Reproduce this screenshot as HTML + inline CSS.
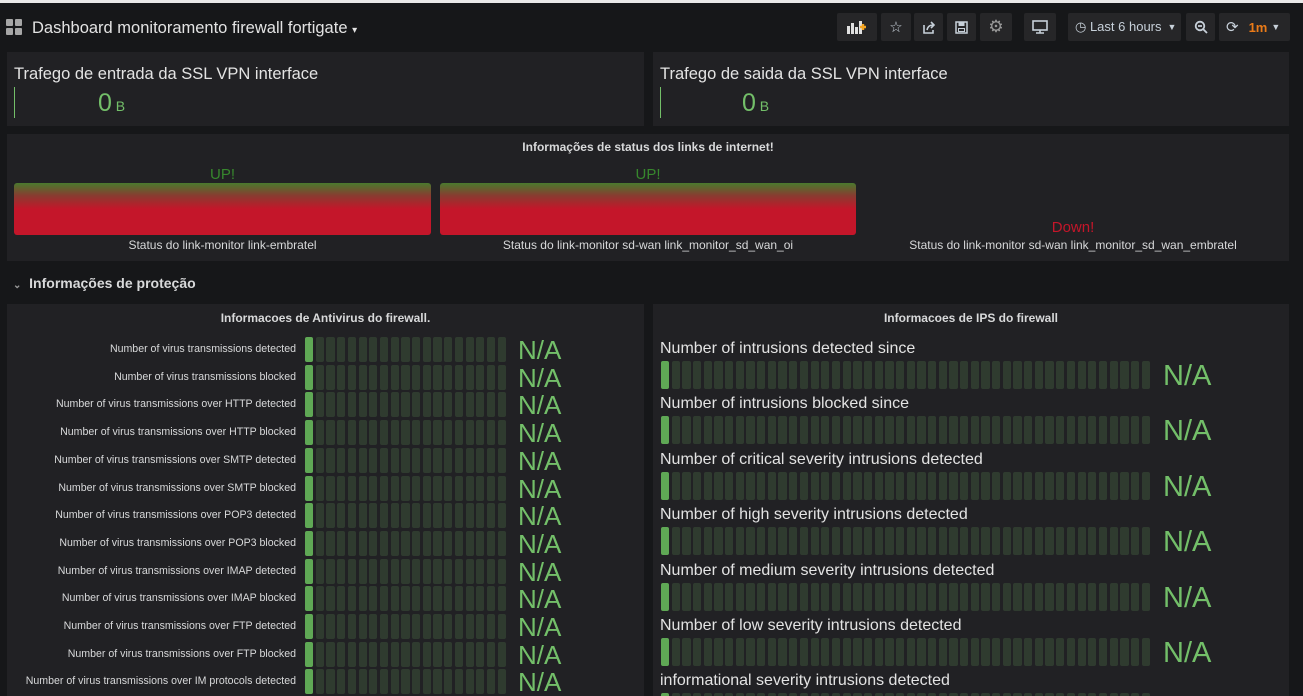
<!DOCTYPE html>
<html style="overflow:hidden;height:696px"><head><meta charset="utf-8"><style>
*{box-sizing:border-box;margin:0;padding:0}
body{width:1303px;height:696px;overflow:hidden;background:#161719;font-family:"Liberation Sans",sans-serif;color:#d8d9da;position:relative}
.a{position:absolute}
.p{position:absolute;background:#212124}
.btn{position:absolute;top:13px;height:28px;background:#262628;border-radius:2px;color:#c7d0d9;font-size:13px;display:flex;align-items:center;justify-content:center}
.g{color:#73bf69}
.cell{position:absolute;background:#2f3b2f;border-radius:2px}
</style></head><body>
<div class="a" style="left:0;top:0;width:1303px;height:3px;background:#e8e8e8"></div>
<svg class="a" style="left:6px;top:19px" width="17" height="16"><rect x="0" y="0" width="7" height="7" rx="1" fill="#a6a6a6"/><rect x="9" y="0" width="7" height="7" rx="1" fill="#a6a6a6"/><rect x="0" y="9" width="7" height="7" rx="1" fill="#a6a6a6"/><rect x="9" y="9" width="7" height="7" rx="1" fill="#a6a6a6"/></svg>
<div class="a" style="left:32px;top:19px;font-size:16.5px;color:#e3e3e3">Dashboard monitoramento firewall fortigate <span style="font-size:10px">▾</span></div>
<div class="btn" style="left:837px;width:40px"><svg width="22" height="14"><rect x="1" y="6" width="3" height="8" fill="#e0e0e0"/><rect x="5" y="3" width="3" height="11" fill="#e0e0e0"/><rect x="9" y="7" width="3" height="7" fill="#e0e0e0"/><rect x="13" y="1" width="3" height="13" fill="#e0e0e0"/><path d="M17 4v6M14 7h6" stroke="#f5a623" stroke-width="2.4"/></svg></div>
<div class="btn" style="left:881px;width:30px;font-size:15px">☆</div>
<div class="btn" style="left:914px;width:29px"><svg width="14" height="13"><path d="M2 4v8h9v-3" fill="none" stroke="#c7d0d9" stroke-width="1.6"/><path d="M5 9c1-4 3-5 7-5M9 1l3 3-3 3" fill="none" stroke="#c7d0d9" stroke-width="1.6"/></svg></div>
<div class="btn" style="left:947px;width:29px"><svg width="13" height="13"><rect x="1" y="1" width="11" height="11" fill="none" stroke="#c7d0d9" stroke-width="1.5"/><rect x="3.5" y="1" width="6" height="4" fill="#c7d0d9"/><rect x="3.5" y="7.5" width="6" height="3" fill="none" stroke="#c7d0d9"/></svg></div>
<div class="btn" style="left:980px;width:32px;font-size:17px;color:#9a9a9a">⚙</div>
<div class="btn" style="left:1024px;width:32px"><svg width="16" height="14"><rect x="1" y="1" width="14" height="9" fill="none" stroke="#c7d0d9" stroke-width="1.6"/><path d="M8 10v3M4 13h8" stroke="#c7d0d9" stroke-width="1.6"/></svg></div>
<div class="btn" style="left:1068px;width:113px;justify-content:flex-start;padding-left:7px">◷&nbsp;Last 6 hours <span style="font-size:9px;margin-left:6px">▼</span></div>
<div class="btn" style="left:1186px;width:29px"><svg width="14" height="14"><circle cx="6" cy="6" r="4.3" fill="none" stroke="#c7d0d9" stroke-width="1.8"/><path d="M9 9l4 4M4 6h4" stroke="#c7d0d9" stroke-width="1.8"/></svg></div>
<div class="btn" style="left:1219px;width:71px;justify-content:flex-start;padding-left:7px"><span style="font-size:15px">⟳</span><span style="color:#eb7b18;font-weight:bold;margin-left:10px">1m</span><span style="font-size:9px;margin-left:4px">▼</span></div>
<div class="p" style="left:7px;top:52px;width:637px;height:74px">
<div class="a" style="left:7px;top:13px;font-size:16.5px;color:#e3e3e3">Trafego de entrada da SSL VPN interface</div>
<div class="a" style="left:7px;top:35px;width:1px;height:31px;background:#73bf69"></div>
<div class="a g" style="left:91px;top:37px;font-size:25px">0<span style="font-size:14px"> B</span></div></div>
<div class="p" style="left:653px;top:52px;width:636px;height:74px">
<div class="a" style="left:7px;top:13px;font-size:16.5px;color:#e3e3e3">Trafego de saida da SSL VPN interface</div>
<div class="a" style="left:7px;top:35px;width:1px;height:31px;background:#73bf69"></div>
<div class="a g" style="left:89px;top:37px;font-size:25px">0<span style="font-size:14px"> B</span></div></div>
<div class="p" style="left:7px;top:134px;width:1282px;height:127px">
<div class="a" style="left:0;width:1282px;top:6px;text-align:center;font-size:12px;font-weight:bold">Informações de status dos links de internet!</div>
<div class="a" style="left:7px;width:417px;top:32px;text-align:center;color:#37872d;font-size:15px">UP!</div>
<div class="a" style="left:7px;width:417px;top:49px;height:52px;border-radius:3px;background:linear-gradient(#4a7a2e 0%,#8a3a30 25%,#c4162a 50%,#c4162a 100%)"></div>
<div class="a" style="left:7px;width:417px;top:104px;text-align:center;font-size:12px">Status do link-monitor link-embratel</div>
<div class="a" style="left:433px;width:416px;top:32px;text-align:center;color:#37872d;font-size:15px">UP!</div>
<div class="a" style="left:433px;width:416px;top:49px;height:52px;border-radius:3px;background:linear-gradient(#4a7a2e 0%,#8a3a30 25%,#c4162a 50%,#c4162a 100%)"></div>
<div class="a" style="left:433px;width:416px;top:104px;text-align:center;font-size:12px">Status do link-monitor sd-wan link_monitor_sd_wan_oi</div>
<div class="a" style="left:858px;width:416px;top:85px;text-align:center;color:#c4162a;font-size:15px">Down!</div>
<div class="a" style="left:858px;width:416px;top:104px;text-align:center;font-size:12px">Status do link-monitor sd-wan link_monitor_sd_wan_embratel</div>
</div>
<div class="a" style="left:13px;top:275px;font-size:14px;font-weight:bold;color:#d8d9da"><span style="font-size:10px;color:#999">⌄</span>&nbsp; Informações de proteção</div>
<div class="p" style="left:7px;top:304px;width:637px;height:392px">
<div class="a" style="left:0;width:637px;top:7px;text-align:center;font-size:12px;font-weight:bold">Informacoes de Antivirus do firewall.</div>
</div>
<div class="p" style="left:653px;top:304px;width:636px;height:392px">
<div class="a" style="left:0;width:636px;top:7px;text-align:center;font-size:12px;font-weight:bold">Informacoes de IPS do firewall</div>
</div>
<div id="c" class="a" style="left:0;top:0;width:1303px;height:696px;overflow:hidden"></div>
<script>
var av=["Number of virus transmissions detected","Number of virus transmissions blocked","Number of virus transmissions over HTTP detected","Number of virus transmissions over HTTP blocked","Number of virus transmissions over SMTP detected","Number of virus transmissions over SMTP blocked","Number of virus transmissions over POP3 detected","Number of virus transmissions over POP3 blocked","Number of virus transmissions over IMAP detected","Number of virus transmissions over IMAP blocked","Number of virus transmissions over FTP detected","Number of virus transmissions over FTP blocked","Number of virus transmissions over IM protocols detected"];
var h="";
av.forEach(function(t,i){var y=337+i*27.7;
h+='<div class="a" style="left:0;width:296px;top:'+(y+6)+'px;text-align:right;font-size:10.6px;white-space:nowrap">'+t+'</div>';
for(var k=0;k<19;k++)h+='<div class="cell" style="left:'+(305+k*10.7)+'px;top:'+y+'px;width:8.3px;height:25px;'+(k==0?'background:#5fa855':'')+'"></div>';
h+='<div class="a g" style="left:518px;top:'+(y-2)+'px;font-size:26px">N/A</div>';});
var ip=["Number of intrusions detected since","Number of intrusions blocked since","Number of critical severity intrusions detected","Number of high severity intrusions detected","Number of medium severity intrusions detected","Number of low severity intrusions detected","informational severity intrusions detected"];
ip.forEach(function(t,i){var y=340+i*55.4;
h+='<div class="a" style="left:660px;top:'+y+'px;font-size:16px;color:#e3e3e3;white-space:nowrap">'+t+'</div>';
for(var k=0;k<46;k++)h+='<div class="cell" style="left:'+(661+k*10.68)+'px;top:'+(y+21)+'px;width:8.3px;height:28px;'+(k==0?'background:#5fa855':'')+'"></div>';
h+='<div class="a g" style="left:1163px;top:'+(y+20)+'px;font-size:29px">N/A</div>';});
document.getElementById('c').innerHTML=h;
</script>
</body></html>
